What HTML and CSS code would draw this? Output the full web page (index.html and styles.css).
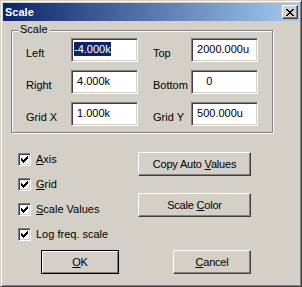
FILE: index.html
```html
<!DOCTYPE html>
<html lang="en">

<head>
    <meta charset="UTF-8">
    <title>Scale</title>
    <link rel="stylesheet" href="styles.css">
</head>

<body>
    <div class="window">
        <div class="titlebar">
            <span class="caption">Scale</span>
            <span class="close">
                <svg width="8" height="7" viewBox="0 0 8 7" shape-rendering="crispEdges">
                    <path d="M0 0h2v1H0z M6 0h2v1H6z M1 1h2v1H1z M5 1h2v1H5z M2 2h4v1H2z M3 3h2v1H3z M2 4h4v1H2z M1 5h2v1H1z M5 5h2v1H5z M0 6h2v1H0z M6 6h2v1H6z" fill="#000"/>
                </svg>
            </span>
        </div>

        <div class="group">
            <span class="legend">Scale</span>
            <div class="field">
                <span class="label lbl-left">Left</span>
                <div class="edit"><span class="sel">-4.000k</span></div>
            </div>
            <div class="field">
                <span class="label lbl-right">Top</span>
                <div class="edit"> 2000.000u</div>
            </div>
            <div class="field">
                <span class="label lbl-left">Right</span>
                <div class="edit"> 4.000k</div>
            </div>
            <div class="field">
                <span class="label lbl-right">Bottom</span>
                <div class="edit">    0</div>
            </div>
            <div class="field">
                <span class="label lbl-left">Grid X</span>
                <div class="edit"> 1.000k</div>
            </div>
            <div class="field">
                <span class="label lbl-right">Grid Y</span>
                <div class="edit"> 500.000u</div>
            </div>
        </div>

        <div class="options">
            <div class="checks">
                <label class="check"><span class="box"><svg width="7" height="7" viewBox="0 0 7 7" shape-rendering="crispEdges"><path d="M0 2h1v3H0z M1 3h1v3H1z M2 4h1v3H2z M3 3h1v3H3z M4 2h1v3H4z M5 1h1v3H5z M6 0h1v3H6z" fill="#000"/></svg></span><span><u>A</u>xis</span></label>
                <label class="check"><span class="box"><svg width="7" height="7" viewBox="0 0 7 7" shape-rendering="crispEdges"><path d="M0 2h1v3H0z M1 3h1v3H1z M2 4h1v3H2z M3 3h1v3H3z M4 2h1v3H4z M5 1h1v3H5z M6 0h1v3H6z" fill="#000"/></svg></span><span><u>G</u>rid</span></label>
                <label class="check"><span class="box"><svg width="7" height="7" viewBox="0 0 7 7" shape-rendering="crispEdges"><path d="M0 2h1v3H0z M1 3h1v3H1z M2 4h1v3H2z M3 3h1v3H3z M4 2h1v3H4z M5 1h1v3H5z M6 0h1v3H6z" fill="#000"/></svg></span><span><u>S</u>cale Values</span></label>
                <label class="check"><span class="box"><svg width="7" height="7" viewBox="0 0 7 7" shape-rendering="crispEdges"><path d="M0 2h1v3H0z M1 3h1v3H1z M2 4h1v3H2z M3 3h1v3H3z M4 2h1v3H4z M5 1h1v3H5z M6 0h1v3H6z" fill="#000"/></svg></span><span>Log freq. scale</span></label>
            </div>
            <div class="side-buttons">
                <button class="btn btn-wide">Copy Auto <u>V</u>alues</button>
                <button class="btn btn-wide">Scale <u>C</u>olor</button>
            </div>
        </div>

        <div class="actions">
            <button class="btn btn-default"><u>O</u>K</button>
            <button class="btn btn-cancel"><u>C</u>ancel</button>
        </div>
    </div>
</body>

</html>
```

FILE: styles.css
```css
* {
    padding: 0;
    margin: 0;
    box-sizing: border-box;
}

body {
    background-color: #d4d0c8;
    font-family: "Liberation Sans", Arial, sans-serif;
    font-size: 11px;
    line-height: 13px;
    color: #000;
}

u {
    text-decoration: underline;
    text-underline-offset: 1px;
}

/* 窗口外框 */
.window {
    width: 302px;
    height: 287px;
    border: 1px solid;
    border-color: #d4d0c8 #404040 #404040 #d4d0c8;
    box-shadow: inset 1px 1px 0 #fff, inset -1px -1px 0 #808080;
    padding: 2px;
    background-color: #d4d0c8;
}

.titlebar {
    height: 18px;
    display: flex;
    align-items: center;
    justify-content: space-between;
    padding-left: 2px;
    background: linear-gradient(to right, #0a246a, #a6caf0);
}

.caption {
    color: #fff;
    font-weight: 700;
}

.close {
    width: 16px;
    height: 14px;
    margin-right: 1px;
    display: flex;
    align-items: center;
    justify-content: center;
    padding-top: 1px;
    background-color: #d4d0c8;
    border: 1px solid;
    border-color: #fff #404040 #404040 #fff;
    box-shadow: inset -1px -1px 0 #808080;
}

/* 分组框 */
.group {
    position: relative;
    margin: 9px 0 0 8px;
    width: 262px;
    height: 103px;
    border: 1px solid #808080;
    box-shadow: 1px 1px 0 #fff, inset 1px 1px 0 #fff;
    padding: 7px 0 0 14px;
    display: grid;
    grid-template-columns: 112px 105px;
    column-gap: 15px;
    row-gap: 8px;
    align-content: start;
}

.legend {
    position: absolute;
    top: -8px;
    left: 6px;
    padding: 0 2px;
    background-color: #d4d0c8;
}

.field {
    display: flex;
    height: 24px;
}

.label {
    padding-top: 9px;
}

.lbl-left {
    width: 45px;
}

.lbl-right {
    width: 38px;
}

.edit {
    width: 67px;
    height: 24px;
    background-color: #fff;
    border: 1px solid;
    border-color: #808080 #fff #fff #808080;
    box-shadow: inset 1px 1px 0 #404040, inset -1px -1px 0 #d4d0c8;
    padding: 4px 0 0 2px;
    white-space: pre;
}

.sel {
    background-color: #0a246a;
    color: #fff;
    padding: 1px 0;
}

/* 复选框和按钮 */
.options {
    display: grid;
    grid-template-columns: 135px 113px;
    margin-top: 19px;
}

.checks {
    padding: 1px 0 0 15px;
    display: flex;
    flex-direction: column;
    gap: 12px;
}

.check {
    display: flex;
    align-items: center;
    height: 13px;
    gap: 5px;
}

.box {
    width: 13px;
    height: 13px;
    background-color: #fff;
    border: 1px solid;
    border-color: #808080 #fff #fff #808080;
    box-shadow: inset 1px 1px 0 #404040, inset -1px -1px 0 #d4d0c8;
    display: flex;
    align-items: center;
    justify-content: center;
}

.side-buttons {
    display: flex;
    flex-direction: column;
    gap: 17px;
}

.btn {
    height: 24px;
    font-family: inherit;
    font-size: 11px;
    line-height: 13px;
    letter-spacing: -0.2px;
    color: #000;
    background-color: #d4d0c8;
    border: 1px solid;
    border-color: #fff #404040 #404040 #fff;
    box-shadow: inset -1px -1px 0 #808080;
    text-align: center;
}

.btn-wide {
    width: 113px;
}

.actions {
    display: flex;
    margin-top: 9px;
}

.btn-default {
    width: 78px;
    margin-left: 38px;
    border-color: #000;
    box-shadow: inset 1px 1px 0 #fff, inset -1px -1px 0 #808080;
}

.btn-cancel {
    width: 78px;
    margin-left: 54px;
}
```
